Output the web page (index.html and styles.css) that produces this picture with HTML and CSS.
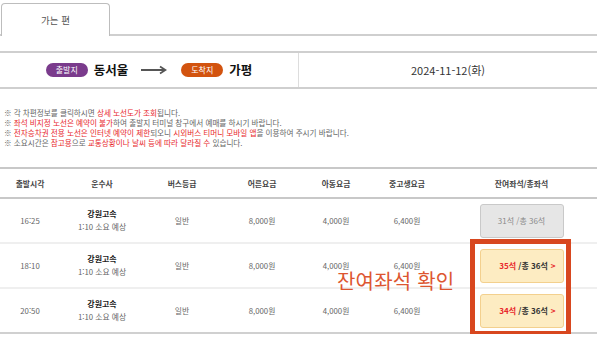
FILE: index.html
```html
<!DOCTYPE html>
<html lang="ko">
<head>
<meta charset="utf-8">
<link rel="stylesheet" href="styles.css">
</head>
<body>
<div class="page">
  <div class="tabs">
    <div class="tab">가는 편</div>
  </div>

  <div class="route">
    <div class="route-left">
      <span class="badge badge-dep">출발지</span>
      <span class="city">동서울</span>
      <svg class="arrow" width="26" height="10" viewBox="0 0 26 10"><path d="M0 5H24M19 1.5L24.5 5L19 8.5" fill="none" stroke="#555" stroke-width="1.8"/></svg>
      <span class="badge badge-arr">도착지</span>
      <span class="city">가평</span>
    </div>
    <div class="route-date">2024-11-12(화)</div>
  </div>

  <ul class="notes">
    <li>※ 각 차편정보를 클릭하시면 <em>상세 노선도가 조회</em>됩니다.</li>
    <li>※ <em>좌석 비지정 노선은 예약이 불가</em>하여 출발지 터미널 창구에서 예매를 하시기 바랍니다.</li>
    <li>※ <em>전자승차권 전용 노선은 인터넷 예약이 제한</em>되오니 <em>시외버스 티머니 모바일 앱</em>을 이용하여 주시기 바랍니다.</li>
    <li>※ 소요시간은 <em>참고용</em>으로 <em>교통상황이나 날씨 등에 따라 달라질 수</em> 있습니다.</li>
  </ul>

  <div class="table-wrap">
    <table class="bus">
      <colgroup>
        <col class="c1"><col class="c2"><col class="c3"><col class="c4"><col class="c5"><col class="c6"><col class="c7">
      </colgroup>
      <thead>
        <tr><th>출발시각</th><th>운수사</th><th>버스등급</th><th>어른요금</th><th>아동요금</th><th>중고생요금</th><th>잔여좌석/총좌석</th></tr>
      </thead>
      <tbody>
        <tr>
          <td>16:25</td>
          <td><div class="co">강원고속</div><div class="dur">1:10 소요 예상</div></td>
          <td>일반</td><td>8,000원</td><td>4,000원</td><td>6,400원</td>
          <td><span class="seat seat-off">31석 /총 36석</span></td>
        </tr>
        <tr>
          <td>18:10</td>
          <td><div class="co">강원고속</div><div class="dur">1:10 소요 예상</div></td>
          <td>일반</td><td>8,000원</td><td>4,000원</td><td>6,400원</td>
          <td><span class="seat seat-on"><b class="left">35석</b> /총 36석<i class="chev">&gt;</i></span></td>
        </tr>
        <tr>
          <td>20:50</td>
          <td><div class="co">강원고속</div><div class="dur">1:10 소요 예상</div></td>
          <td>일반</td><td>8,000원</td><td>4,000원</td><td>6,400원</td>
          <td><span class="seat seat-on"><b class="left">34석</b> /총 36석<i class="chev">&gt;</i></span></td>
        </tr>
      </tbody>
    </table>
    <div class="highlight"></div>
    <div class="callout">잔여좌석 확인</div>
  </div>
</div>
</body>
</html>
```

FILE: styles.css
```css
* { box-sizing: border-box; }
html, body { margin: 0; padding: 0; background: #fff; }
body {
  font-family: "Noto Sans CJK KR", "Noto Sans", sans-serif;
  color: #333;
}
.page { width: 597px; }

.tabs {
  height: 36px;
  padding-top: 3px;
  border-bottom: 2px solid #cfcfcf;
  display: flex;
}
.tab {
  width: 109px;
  height: 33px;
  margin-left: 1px;
  border: 1px solid #bdbdbd;
  border-bottom: none;
  border-radius: 4px 4px 0 0;
  background: #fff;
  font-size: 9.5px;
  line-height: 32px;
  text-align: center;
  color: #555;
}

.route {
  margin-top: 15px;
  height: 38px;
  border-top: 2px solid #cfcfcf;
  border-bottom: 2px solid #cfcfcf;
  display: grid;
  grid-template-columns: 298px 1fr;
}
.route-left {
  display: flex;
  align-items: center;
  justify-content: center;
  gap: 0;
}
.badge {
  display: inline-block;
  width: 42px;
  height: 14px;
  border-radius: 7px;
  color: #fff;
  font-size: 8px;
  line-height: 14px;
  text-align: center;
}
.badge-dep { background: #7a3b8c; }
.badge-arr { background: #d2530f; }
.city {
  font-size: 12.5px;
  font-weight: 700;
  color: #111;
  line-height: 16px;
  margin-left: 6px;
}
.arrow { margin: 0 14px 0 13px; }
.route-date {
  border-left: 1px solid #ddd;
  display: flex;
  align-items: center;
  justify-content: center;
  font-size: 11px;
  color: #333;
}

.notes {
  list-style: none;
  margin: 19px 0 0;
  padding: 0 0 0 4px;
  font-size: 7.6px;
  line-height: 10px;
  color: #666;
}
.notes em { font-style: normal; color: #e8282c; }

.table-wrap { position: relative; margin-top: 19px; }
.bus {
  width: 597px;
  border-collapse: collapse;
  table-layout: fixed;
  font-size: 7.8px;
  color: #666;
}
.c1 { width: 60px; }
.c2 { width: 84px; }
.c3 { width: 76px; }
.c4 { width: 84px; }
.c5 { width: 64px; }
.c6 { width: 78px; }
.c7 { width: 151px; }
.bus th {
  height: 30px;
  border-top: 2px solid #c8c8c8;
  border-bottom: 2px solid #c8c8c8;
  font-weight: 700;
  color: #444;
  text-align: center;
  padding: 0;
}
.bus td {
  height: 45px;
  border-bottom: 2px solid #efefef;
  text-align: center;
  padding: 0;
  line-height: 12px;
}
.bus tbody tr:last-child td { border-bottom: 2px solid #d0d0d0; }
.co { font-weight: 700; color: #222; font-size: 8px; line-height: 12px; }
.dur { color: #666; line-height: 13px; }

.seat {
  position: relative;
  display: inline-block;
  width: 84px;
  height: 34px;
  border-radius: 3px;
  line-height: 32px;
  font-size: 8px;
  vertical-align: middle;
}
.seat-off {
  background: #e6e6e6;
  border: 1px solid #c9c9c9;
  color: #8a8a8a;
}
.seat-on {
  background: #fdecc2;
  border: 1px solid #f3d08e;
  color: #333;
  font-weight: 700;
  padding-left: 4px;
}
.seat-on .left { color: #e8282c; font-weight: 700; }
.chev {
  position: absolute;
  right: 7px;
  top: 0;
  font-style: normal;
  color: #e8282c;
  font-weight: 700;
}

.highlight {
  position: absolute;
  left: 470px;
  top: 72px;
  width: 101px;
  height: 97px;
  border: 5px solid #d8471f;
}
.callout {
  position: absolute;
  left: 337px;
  top: 101px;
  font-size: 20px;
  line-height: 26px;
  color: #dd5630;
  letter-spacing: 0.2px;
}
```
